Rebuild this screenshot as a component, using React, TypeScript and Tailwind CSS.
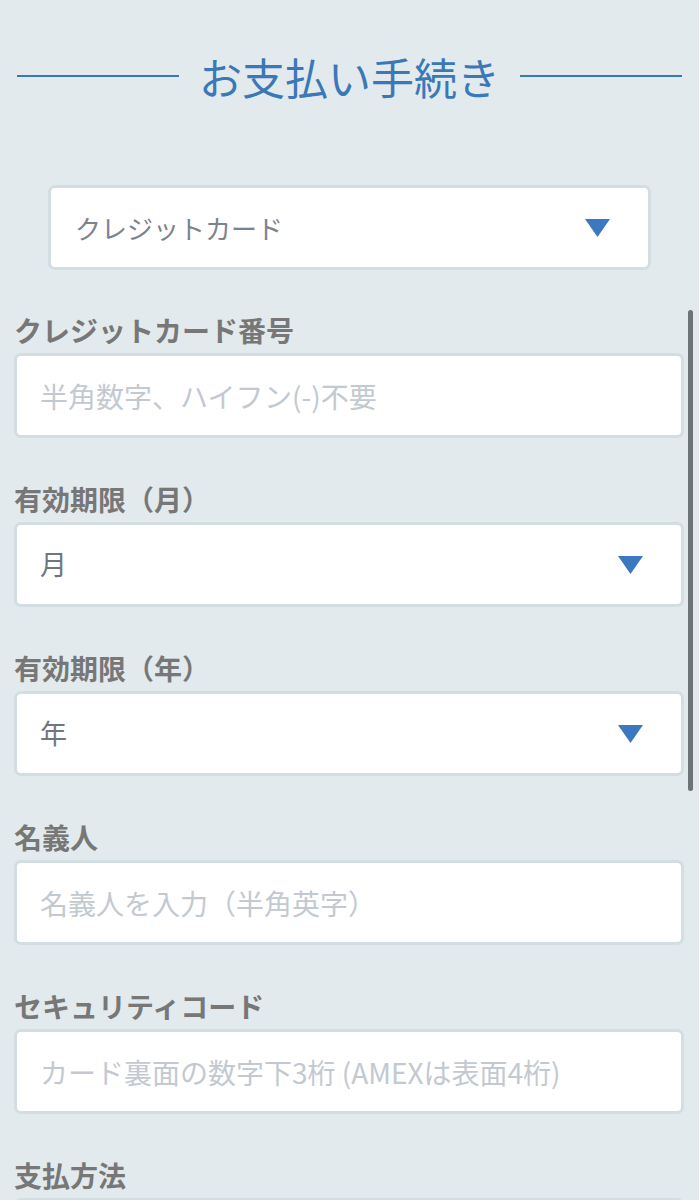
/* ──────────────────────────────────────────────
   Payment form — card details (mobile)
   ────────────────────────────────────────────── */

const JP = "font-['Noto_Sans_CJK_JP','Noto_Sans',sans-serif]";

function Caret() {
  return (
    <svg width="25" height="18" viewBox="0 0 25 18" className="shrink-0">
      <path d="M0 0 H25 L12.5 18 Z" fill="#3b78bf" />
    </svg>
  );
}

function Label({ children }: { children: string }) {
  return (
    <p className="h-[32px] text-[28px] leading-[32px] font-bold text-[#777777]">
      {children}
    </p>
  );
}

function TextField({ label, placeholder }: { label: string; placeholder: string }) {
  return (
    <div className="mb-[45px]">
      <Label>{label}</Label>
      <div className="mt-[7px] flex h-[85px] items-center rounded-[7px] border-[3px] border-[#d3dee2] bg-white pl-[23px] pr-[20px]">
        <input
          placeholder={placeholder}
          className={`w-full bg-transparent text-[28px] text-[#6f7680] outline-none placeholder:text-[#c3c9d1] ${JP}`}
        />
      </div>
    </div>
  );
}

function SelectField({ label, value }: { label: string; value: string }) {
  return (
    <div className="mb-[45px]">
      <Label>{label}</Label>
      <div className="mt-[7px] flex h-[85px] items-center justify-between rounded-[7px] border-[3px] border-[#d3dee2] bg-white pl-[23px] pr-[38px]">
        <span className="text-[27px] text-[#6f7680]">{value}</span>
        <Caret />
      </div>
    </div>
  );
}

export default function App() {
  return (
    <div className={`relative h-[1200px] overflow-hidden bg-[#e2eaed] ${JP}`}>
      {/* Title */}
      <div className="flex h-[152px] items-center gap-[20px] px-[17px]">
        <div className="h-[2px] flex-1 bg-[#3b78b7]" />
        <h1 className="text-[43px] leading-none font-normal text-[#3b78b7]">お支払い手続き</h1>
        <div className="h-[2px] flex-1 bg-[#3b78b7]" />
      </div>

      {/* Payment type */}
      <div className="mx-[48px] mt-[33px] flex h-[85px] items-center justify-between rounded-[7px] border-[3px] border-[#d3dee2] bg-white pl-[24px] pr-[38px]">
        <span className="text-[26px] text-[#7b838e]">クレジットカード</span>
        <Caret />
      </div>

      {/* Card fields */}
      <div className="mt-[44px] pl-[14px] pr-[15px]">
        <TextField label="クレジットカード番号" placeholder="半角数字、ハイフン(-)不要" />
        <SelectField label="有効期限（月）" value="月" />
        <SelectField label="有効期限（年）" value="年" />
        <TextField label="名義人" placeholder="名義人を入力（半角英字）" />
        <TextField label="セキュリティコード" placeholder="カード裏面の数字下3桁 (AMEXは表面4桁)" />
        <div>
          <Label>支払方法</Label>
          <div className="mt-[7px] h-[85px] rounded-[7px] border-[3px] border-[#d3dee2] bg-white" />
        </div>
      </div>

      {/* Scroll indicator */}
      <div className="absolute left-[688px] top-[310px] h-[481px] w-[5px] rounded-full bg-[#6e7375]" />
    </div>
  );
}
